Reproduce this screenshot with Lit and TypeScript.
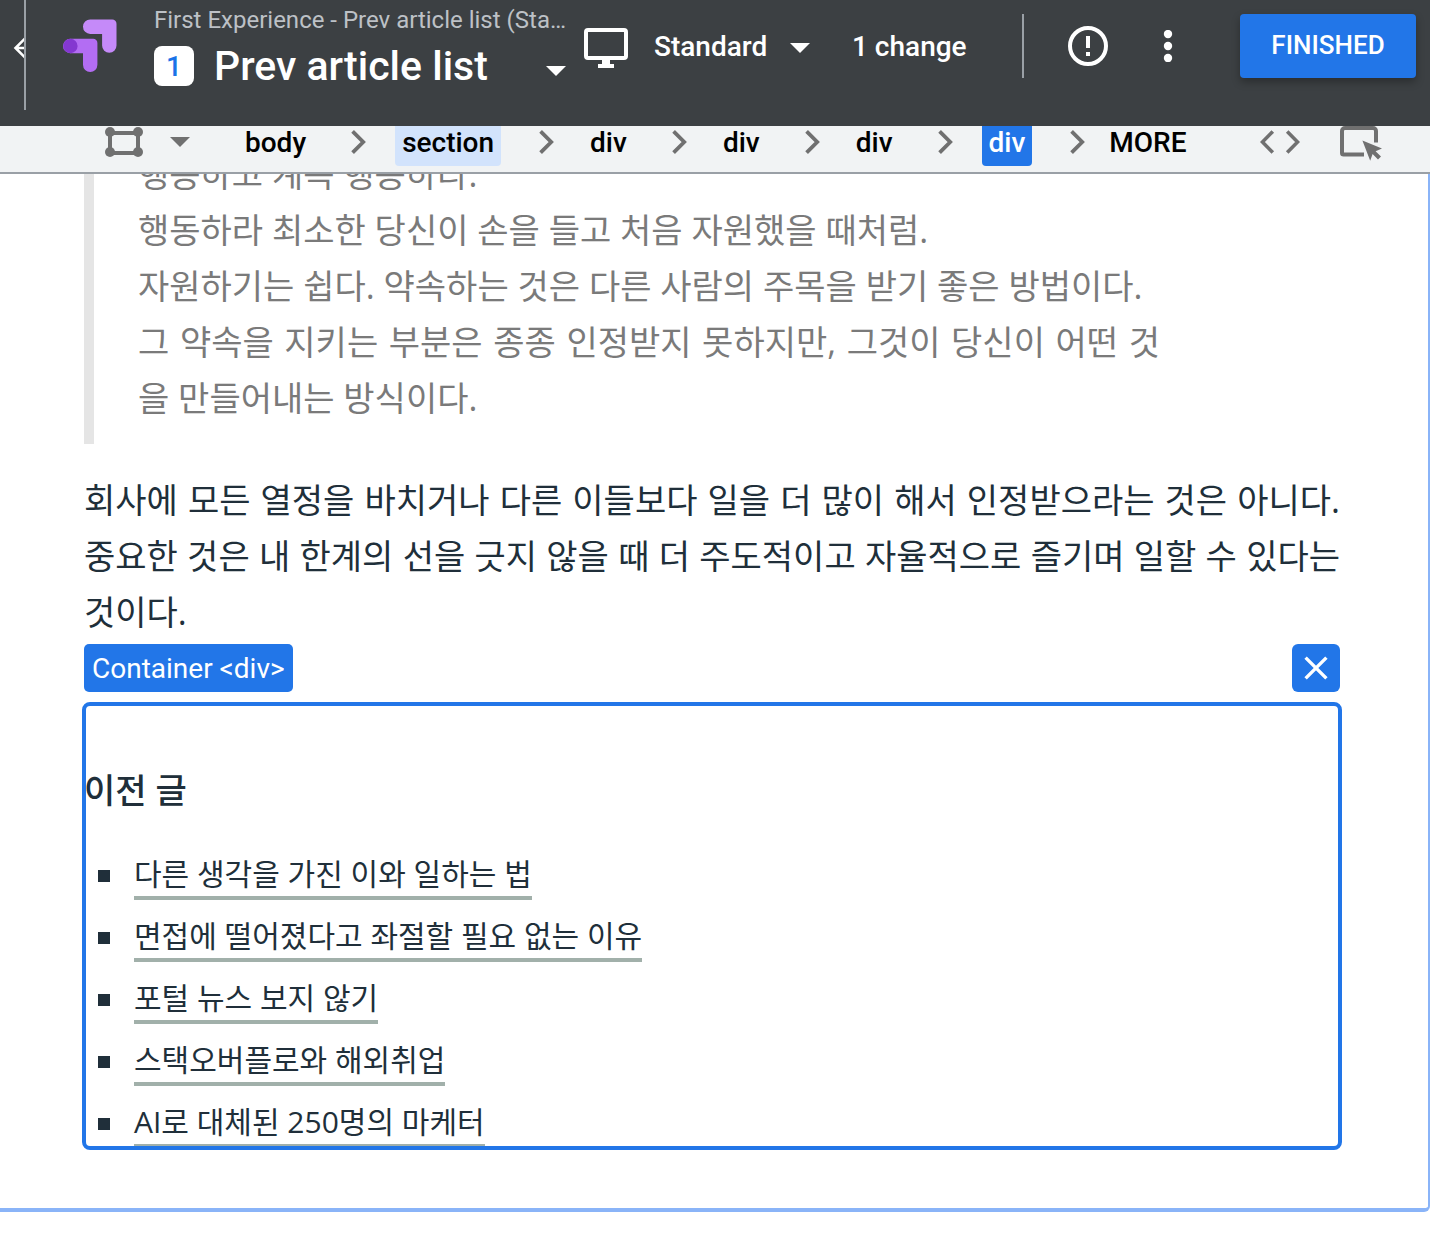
import { LitElement, html, css } from "lit";
import { customElement, property } from "lit/decorators.js";

const caret = html`<svg class="caret" viewBox="0 0 20 10" aria-hidden="true">
  <path d="M0 0h20L10 10z" fill="currentColor" />
</svg>`;

const chevron = html`<svg class="chevron" viewBox="0 0 15 24" aria-hidden="true">
  <path d="M1.6 1.4 12.2 12 1.6 22.6" fill="none" stroke="currentColor" stroke-width="3.8" />
</svg>`;

@customElement("experiment-header")
export class ExperimentHeader extends LitElement {
  static styles = css`
    :host {
      display: block;
      background: #3c4043;
      color: #fff;
      font-family: Roboto, "Liberation Sans", sans-serif;
    }
    * {
      box-sizing: border-box;
    }
    .bar {
      display: flex;
      align-items: flex-start;
      height: 126px;
      padding-right: 14px;
    }
    button,
    select {
      appearance: none;
      border: 0;
      padding: 2px 0 0;
      margin: 0;
      background: none;
      color: inherit;
      font: inherit;
      cursor: pointer;
    }
    svg {
      display: block;
      flex: none;
    }
    .back {
      flex: none;
      width: 26px;
      height: 110px;
      padding: 34px 0 0 12px;
      border-right: 2px solid #9aa0a6;
      overflow: hidden;
      display: flex;
      align-items: flex-start;
    }
    .back svg {
      width: 28px;
      height: 28px;
    }
    .logo {
      width: 54px;
      height: 54px;
      margin: 19px 37px 0;
    }
    .titles {
      flex: 0 1 424px;
      min-width: 0;
      padding-top: 6px;
    }
    .crumb {
      margin: 0;
      font-size: 24px;
      line-height: 28px;
      color: #bdc1c6;
      white-space: nowrap;
      overflow: hidden;
      text-overflow: ellipsis;
    }
    .current {
      display: flex;
      align-items: center;
      height: 40px;
      margin-top: 12px;
      padding-right: 12px;
    }
    .badge {
      flex: none;
      width: 40px;
      height: 40px;
      margin-right: 20px;
      border-radius: 8px;
      background: #fff;
      color: #1a73e8;
      font-weight: 500;
      font-size: 28px;
      line-height: 42px;
      text-align: center;
    }
    .page {
      flex: 1;
      min-width: 0;
      padding: 0;
      font-size: 41px;
      font-weight: 500;
      line-height: 48px;
    }
    .caret {
      width: 20px;
      height: 10px;
    }
    .current .caret {
      margin-top: 10px;
    }
    .tools {
      flex: 1;
      display: flex;
      align-items: center;
      height: 64px;
      margin-top: 14px;
      font-size: 28px;
      font-weight: 500;
      line-height: 36px;
      white-space: nowrap;
    }
    .monitor {
      width: 44px;
      height: 40px;
      margin: 4px 26px 0 6px;
    }
    .standard {
      display: flex;
      align-items: center;
      gap: 22px;
      margin-right: 42px;
    }
    .standard .caret {
      margin-top: 4px;
    }
    .divider {
      width: 2px;
      height: 64px;
      margin: 0 44px 0 auto;
      background: #9aa0a6;
    }
    .alert,
    .menu {
      padding: 0;
    }
    .alert svg {
      width: 40px;
      height: 40px;
    }
    .menu {
      margin: 0 66px 0 54px;
    }
    .menu svg {
      width: 12px;
      height: 32px;
    }
    .finish {
      width: 176px;
      height: 64px;
      padding: 0 0 2px;
      border-radius: 4px;
      background: #2276e8;
      font-size: 26px;
      font-weight: 500;
      box-shadow: 0 4px 8px rgba(0, 0, 0, 0.3);
    }
  `;

  render() {
    return html`
      <header class="bar">
        <button class="back" aria-label="Back">
          <svg viewBox="0 0 28 28" aria-hidden="true">
            <path d="M14 3.5 3.5 14 14 24.5M3.5 14h24" fill="none" stroke="#fff" stroke-width="2.6" />
          </svg>
        </button>
        <svg class="logo" viewBox="0 0 54 54" aria-hidden="true">
          <path
            d="M27.2.5h22.1a4.2 4.2 0 0 1 4.2 4.2v21.9a7.2 7.2 0 0 1-14.4 0V14.9H27.2a7.2 7.2 0 0 1 0-14.4z"
            fill="#c58af9"
          />
          <path
            d="M7.2 19.8h23a4.2 4.2 0 0 1 4.2 4.2v21.8a7.2 7.2 0 0 1-14.4 0V34.2H7.2a7.2 7.2 0 0 1 0-14.4z"
            fill="#b36df3"
          />
          <circle cx="7.4" cy="27" r="7.2" fill="#8438d0" />
        </svg>
        <div class="titles">
          <p class="crumb">First Experience - Prev article list (Standard)</p>
          <div class="current">
            <span class="badge">1</span>
            <select class="page" aria-label="Variant">
              <option>Prev article list</option>
            </select>
            ${caret}
          </div>
        </div>
        <div class="tools">
          <svg class="monitor" viewBox="0 0 44 40" aria-hidden="true">
            <rect x="2" y="2" width="40" height="28" rx="2" fill="none" stroke="#fff" stroke-width="4" />
            <path d="M18 31h8v5h4v4H14v-4h4z" fill="#fff" />
          </svg>
          <div class="standard">
            <select aria-label="Device">
              <option>Standard</option>
            </select>
            ${caret}
          </div>
          <button>1 change</button>
          <span class="divider"></span>
          <button class="alert" aria-label="Issues">
            <svg viewBox="0 0 40 40" aria-hidden="true">
              <circle cx="20" cy="20" r="18" fill="none" stroke="#fff" stroke-width="4" />
              <path d="M18 10h4v12h-4zM18 26h4v4h-4z" fill="#fff" />
            </svg>
          </button>
          <button class="menu" aria-label="More options">
            <svg viewBox="0 0 12 32" fill="#fff" aria-hidden="true">
              <circle cx="6" cy="4" r="4.2" />
              <circle cx="6" cy="16" r="4.2" />
              <circle cx="6" cy="28" r="4.2" />
            </svg>
          </button>
          <button class="finish">FINISHED</button>
        </div>
      </header>
    `;
  }
}

@customElement("element-path")
export class ElementPath extends LitElement {
  @property({ type: Array }) path: { tag: string; state?: string }[] = [];

  static styles = css`
    :host {
      display: block;
      font-family: Roboto, "Liberation Sans", sans-serif;
    }
    * {
      box-sizing: border-box;
    }
    .bar {
      display: flex;
      align-items: flex-start;
      height: 48px;
      padding: 0 47px 0 105px;
      background: #f1f3f4;
      border-bottom: 2px solid #9aa0a6;
      color: #707070;
      overflow: hidden;
    }
    button {
      appearance: none;
      flex: none;
      display: flex;
      align-items: center;
      height: 40px;
      margin: 0;
      padding: 0 7px 6px;
      border: 0;
      border-radius: 0 0 4px 4px;
      background: none;
      color: inherit;
      font: 500 28px/34px Roboto, "Liberation Sans", sans-serif;
      cursor: pointer;
    }
    .tag,
    .more {
      color: #000;
    }
    .ancestor {
      background: #d2e3fc;
    }
    .selected {
      background: #2276e8;
      color: #fff;
    }
    svg {
      display: block;
      flex: none;
    }
    .pick {
      gap: 27px;
      padding: 0 0 8px;
      margin-right: 48px;
    }
    .frame {
      width: 38px;
      height: 30px;
    }
    .caret {
      width: 20px;
      height: 10px;
    }
    .crumbs {
      display: flex;
      margin: 0;
      padding: 0;
      list-style: none;
    }
    .crumbs li {
      display: flex;
    }
    .chevron {
      width: 15px;
      height: 24px;
      margin: 4px 29px 0 38px;
    }
    .crumbs li:last-child .chevron {
      margin-right: 17px;
    }
    .right {
      display: flex;
      gap: 40px;
      margin-left: auto;
    }
    .right button {
      padding: 0 0 8px;
    }
    .code svg {
      width: 40px;
      height: 24px;
    }
    .right .inspect {
      padding-bottom: 6px;
    }
    .inspect svg {
      width: 43px;
      height: 35px;
    }
  `;

  render() {
    return html`
      <nav class="bar" aria-label="Element path">
        <button class="pick" aria-label="Selection mode">
          <svg class="frame" viewBox="0 0 38 30" aria-hidden="true">
            <rect x="5" y="6" width="28" height="20" fill="none" stroke="currentColor" stroke-width="4" />
            <g fill="currentColor">
              <circle cx="5" cy="5" r="5" />
              <circle cx="33" cy="5" r="5" />
              <circle cx="5" cy="25" r="5" />
              <circle cx="33" cy="25" r="5" />
            </g>
          </svg>
          ${caret}
        </button>
        <ol class="crumbs">
          ${this.path.map(
            (p) => html`<li><button class="tag ${p.state ?? ""}">${p.tag}</button>${chevron}</li>`
          )}
        </ol>
        <button class="more">MORE</button>
        <div class="right">
          <button class="code" aria-label="Edit code">
            <svg viewBox="0 0 40 24" aria-hidden="true">
              <path
                d="M12.8 1.4 2.4 12l10.4 10.6M27.2 1.4 37.6 12 27.2 22.6"
                fill="none"
                stroke="currentColor"
                stroke-width="3.6"
              />
            </svg>
          </button>
          <button class="inspect" aria-label="Select element">
            <svg viewBox="0 0 43 35" aria-hidden="true">
              <path
                d="M36 16.5V5a3 3 0 0 0-3-3H5a3 3 0 0 0-3 3v22a1.6 1.6 0 0 0 1.6 1.6H24"
                fill="none"
                stroke="currentColor"
                stroke-width="4"
              />
              <path
                d="M22.4 14.6 42 22.6l-6.4 2.6 5.4 5.2-3 3-5.4-5.4-2.4 6.8z"
                fill="currentColor"
              />
            </svg>
          </button>
        </div>
      </nav>
    `;
  }
}

@customElement("article-canvas")
export class ArticleCanvas extends LitElement {
  @property({ type: Array }) links: string[] = [];

  static styles = css`
    :host {
      display: block;
      overflow: hidden;
      background: #fff;
      color: #202f3a;
      font-family: "Open Sans", "Noto Sans CJK KR", sans-serif;
    }
    * {
      box-sizing: border-box;
    }
    .page {
      margin-top: -28px;
      padding: 0 88px 60px 84px;
      border: solid #8ab4f8;
      border-width: 0 2px 4px 0;
      border-bottom-right-radius: 6px;
    }
    p,
    blockquote {
      margin: 0;
      font-size: 34px;
      line-height: 56px;
      text-align: justify;
    }
    blockquote {
      padding: 0 180px 18px 44px;
      border-left: 10px solid #e5e5e5;
      color: #7a7a7a;
    }
    .body {
      margin-top: 28px;
    }
    .actions {
      display: flex;
      justify-content: space-between;
      margin: 4px 0 12px;
      font-family: Roboto, "Liberation Sans", sans-serif;
      font-size: 28px;
      line-height: 50px;
      color: #fff;
    }
    .label {
      height: 48px;
      padding: 0 8px;
      border-radius: 5px;
      background: #2276e8;
    }
    .close {
      display: flex;
      align-items: center;
      justify-content: center;
      width: 48px;
      height: 48px;
      padding: 0;
      border: 0;
      border-radius: 6px;
      background: #2276e8;
      cursor: pointer;
    }
    .close svg {
      width: 24px;
      height: 24px;
    }
    .container {
      position: relative;
      height: 444px;
      padding-top: 58px;
    }
    .container::after {
      content: "";
      position: absolute;
      inset: -2px;
      border: 4px solid #2276e8;
      border-radius: 8px;
      pointer-events: none;
    }
    h2 {
      margin: 0 0 24px;
      font-size: 34px;
      font-weight: 500;
      line-height: 56px;
    }
    ul {
      margin: 0;
      padding: 0 0 0 14px;
      list-style: none;
    }
    li {
      display: flex;
      align-items: flex-start;
      gap: 24px;
      height: 62px;
    }
    li::before {
      content: "";
      width: 12px;
      height: 12px;
      margin-top: 28px;
      background: currentColor;
    }
    a {
      padding-top: 10px;
      color: inherit;
      font-size: 30px;
      line-height: 44px;
      text-decoration: none;
      border-bottom: 4px solid #a1b0aa;
    }
  `;

  render() {
    return html`
      <main class="page">
        <blockquote>
          행동하고 계속 행동하라.<br />
          행동하라 최소한 당신이 손을 들고 처음 자원했을 때처럼.<br />
          자원하기는 쉽다. 약속하는 것은 다른 사람의 주목을 받기 좋은 방법이다.<br />
          그 약속을 지키는 부분은 종종 인정받지 못하지만, 그것이 당신이 어떤 것을 만들어내는 방식이다.
        </blockquote>
        <p class="body">
          회사에 모든 열정을 바치거나 다른 이들보다 일을 더 많이 해서 인정받으라는 것은 아니다. 중요한 것은 내 한계의 선을
          긋지 않을 때 더 주도적이고 자율적으로 즐기며 일할 수 있다는 것이다.
        </p>
        <div class="actions">
          <span class="label">Container &lt;div&gt;</span>
          <button class="close" aria-label="Clear selection">
            <svg viewBox="0 0 24 24" aria-hidden="true">
              <path d="M1.6 1.6 22.4 22.4M22.4 1.6 1.6 22.4" stroke="#fff" stroke-width="3.4" />
            </svg>
          </button>
        </div>
        <section class="container">
          <h2>이전 글</h2>
          <ul>
            ${this.links.map((t) => html`<li><a href="#">${t}</a></li>`)}
          </ul>
        </section>
      </main>
    `;
  }
}

@customElement("app-root")
export class AppRoot extends LitElement {
  static styles = css`
    :host {
      display: block;
      min-height: 100vh;
      background: #fff;
    }
  `;

  private path = [
    { tag: "body" },
    { tag: "section", state: "ancestor" },
    { tag: "div" },
    { tag: "div" },
    { tag: "div" },
    { tag: "div", state: "selected" },
  ];

  private links = [
    "다른 생각을 가진 이와 일하는 법",
    "면접에 떨어졌다고 좌절할 필요 없는 이유",
    "포털 뉴스 보지 않기",
    "스택오버플로와 해외취업",
    "AI로 대체된 250명의 마케터",
  ];

  render() {
    return html`
      <experiment-header></experiment-header>
      <element-path .path=${this.path}></element-path>
      <article-canvas .links=${this.links}></article-canvas>
    `;
  }
}
